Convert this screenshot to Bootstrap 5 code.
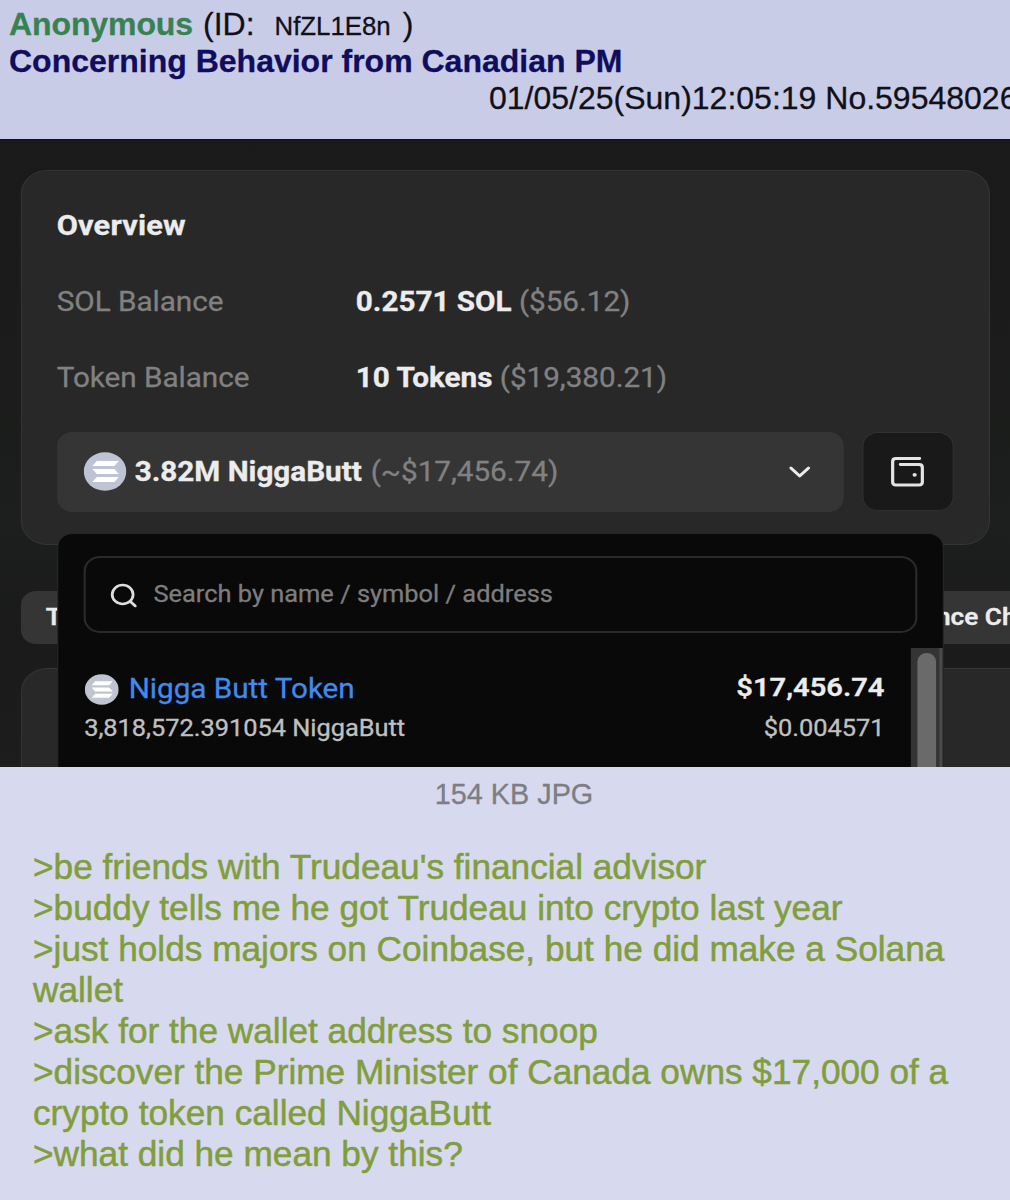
<!DOCTYPE html>
<html lang="en">
<head>
<meta charset="utf-8">
<title>Thread</title>
<link href="https://cdn.jsdelivr.net/npm/bootstrap@5.3.0/dist/css/bootstrap.min.css" rel="stylesheet">
<style>
body{width:1010px;height:1200px;overflow:hidden;background:#d7d9ee;font-family:"Liberation Sans",Arial,sans-serif;color:#101018;-webkit-text-stroke:.3px currentColor}
.post-head{height:139px;background:#c9cce7;font-size:32px;line-height:37.3px;padding:6.3px 0 0 9px;white-space:nowrap}
.byline{height:36.8px}
.poster{color:#388252;letter-spacing:-.1px}
.subject{color:#100c5e}
.idtag{margin-left:10px}
.uid{font-size:25.8px;margin:2px 12px 0 20px}
.stamp{padding-left:480px}
/* the attachment is shown 10% wider than its natural proportions */
.shot{width:919px;height:628px;transform:scaleX(1.1);transform-origin:0 0;overflow:hidden;background:linear-gradient(#1a1a1a,#1b1c1b 35%,#1c1f1d 62%,#1a1a1a 78%,#1c1d1c);border-top:1px solid #101013;font-family:Roboto,sans-serif;font-size:27px;line-height:40px;color:#ececec;padding:30px 0 0 19px;white-space:nowrap}
.panel{background:#282828;border:1px solid #333534;border-radius:24px}
.overview{width:881px;height:375px;padding:35px 32px 0 31.5px;position:relative;letter-spacing:-.03px}
.heading{font-size:28px;letter-spacing:.15px}
.dim{color:#818181}
.approx{margin-left:1.5px}
.key{width:272px}
.rows{gap:36px}
.picker-row{margin-top:34px}
.pick{width:715.5px;height:79.5px;background:#353535;border-radius:14px;padding:0 30px 0 24px}
.wallet{width:83px;height:79px;background:#191919;border:1px solid #303030;border-radius:14px;margin-left:16.5px}
.menu{left:32px;top:362px;width:805.5px;height:320px;background:#090909;border:1px solid #272727;border-radius:14px;z-index:2}
.find{margin:22px 23px 0;height:77px;border:2px solid #2a2a2a;border-radius:15px;padding:1px 0 0 22px;font-size:23.1px;color:#7d7d7d;letter-spacing:0}
.find span{margin-left:14.5px}
.minor{font-size:23.1px;color:#c0c0c0}
.link-tone{color:#418af0;margin-left:9.5px}
.entry{flex:1;padding:21px 23.5px 0 23.5px}
.entry .first{height:40px}
.entry .minor{line-height:39.5px}
.entry .amount{font-size:26.5px;line-height:35px}
.track{width:29px;background:#343434;border-right:3px solid #4a4a4a;padding:5px 0 0 6.5px}
.thumb{width:17px;height:150px;border-radius:9px;background:#6a6a6a}
.list-area{margin-top:15px}
.tabs-row{margin-top:46px;width:1100px;font-size:23.8px;font-weight:600}
.tab-btn{height:53px;border-radius:14px;background:#353535;padding-left:22.5px;line-height:53px}
.tab-first{width:160px}
.tab-second{width:260px;margin-left:602.5px}
.lower{margin-top:24px;width:1100px;height:200px}
.caption-line{font-size:28.8px;line-height:40px;color:#7d7d82;padding:7px 0 0 18px}
.quote{margin:33px 0 0 33px;font-size:35.22px;line-height:40.95px;color:#819d3c;white-space:nowrap;-webkit-text-stroke-width:.5px}
</style>
<script src="https://cdn.jsdelivr.net/npm/bootstrap@5.3.0/dist/js/bootstrap.bundle.min.js"></script>
</head>
<body>
<header class="post-head overflow-hidden">
  <div class="byline d-flex"><span class="poster fw-bold">Anonymous</span><span class="idtag">(ID:</span><span class="uid">NfZL1E8n</span><span>)</span></div>
  <div class="subject fw-bold">Concerning Behavior from Canadian PM</div>
  <div class="stamp">01/05/25(Sun)12:05:19 No.59548026</div>
</header>

<section class="shot">
  <div class="panel overview">
    <div class="d-flex flex-column rows">
      <div class="heading fw-bold">Overview</div>
      <div class="d-flex"><span class="key dim">SOL Balance</span><span><b>0.2571 SOL</b> <span class="dim">($56.12)</span></span></div>
      <div class="d-flex"><span class="key dim">Token Balance</span><span><b>10 Tokens</b> <span class="dim">($19,380.21)</span></span></div>
    </div>
    <div class="picker-row d-flex">
      <div class="pick d-flex align-items-center">
        <svg width="39" height="39" viewBox="0 0 39 39"><circle cx="19.5" cy="19.5" r="19.3" fill="#bfc4d4"/><g fill="#fff"><path d="M12 9H32L28 14H8Z"/><path d="M8 17H28L32 22H12Z"/><path d="M12 25H32L28 30H8Z"/></g></svg>
        <span class="ms-2"><b>3.82M NiggaButt</b> <span class="dim approx">(~$17,456.74)</span></span>
        <svg class="ms-auto" width="20" height="14" viewBox="0 0 20 14" fill="none" stroke="#ececec" stroke-width="2.8" stroke-linecap="round" stroke-linejoin="round"><path d="M2 3l8 8 8-8"/></svg>
      </div>
      <div class="wallet d-flex align-items-center justify-content-center">
        <svg width="32" height="32" viewBox="0 0 32 32" fill="none" stroke="#e4e4e4" stroke-width="2.9" stroke-linecap="round"><path d="M27 2.5H5.5Q2.5 2.5 2.500 5.500V26Q2.500 29 5.500 29H26.500Q29.500 29 29.500 26V11.500Q29.500 8.500 26.500 8.500H9.500"/><circle cx="22.500" cy="18.800" r="1.900" fill="#e4e4e4" stroke="none"/></svg>
      </div>
    </div>

    <div class="menu position-absolute d-flex flex-column overflow-hidden">
      <div class="find d-flex align-items-center">
        <svg width="25" height="25" viewBox="0 0 25 25" fill="none" stroke="#dedede" stroke-width="2.500" stroke-linecap="round"><circle cx="11.500" cy="11.500" r="9.500"/><path d="M18.500 18.500l4.500 4.500"/></svg>
        <span>Search by name / symbol / address</span>
      </div>
      <div class="list-area d-flex flex-fill">
        <div class="entry d-flex justify-content-between">
          <div>
            <div class="first d-flex align-items-center">
              <svg width="31" height="31" viewBox="0 0 39 39"><circle cx="19.5" cy="19.5" r="19.3" fill="#bfc4ce"/><g fill="#fff"><path d="M12 9H32L28 14H8Z"/><path d="M8 17H28L32 22H12Z"/><path d="M12 25H32L28 30H8Z"/></g></svg>
              <span class="link-tone">Nigga Butt Token</span>
            </div>
            <div class="minor">3,818,572.391054 NiggaButt</div>
          </div>
          <div class="text-end">
            <div class="first amount fw-semibold">$17,456.74</div>
            <div class="minor">$0.004571</div>
          </div>
        </div>
        <div class="track"><div class="thumb"></div></div>
      </div>
    </div>
  </div>

  <div class="tabs-row d-flex">
    <div class="tab-btn tab-first">Transfers</div>
    <div class="tab-btn tab-second">Balance Changes</div>
  </div>
  <div class="panel lower"></div>
</section>

<div class="caption-line text-center">154 KB JPG</div>
<div class="quote">&gt;be friends with Trudeau's financial advisor<br>&gt;buddy tells me he got Trudeau into crypto last year<br>&gt;just holds majors on Coinbase, but he did make a Solana<br>wallet<br>&gt;ask for the wallet address to snoop<br>&gt;discover the Prime Minister of Canada owns $17,000 of a<br>crypto token called NiggaButt<br>&gt;what did he mean by this?</div>
</body>
</html>
